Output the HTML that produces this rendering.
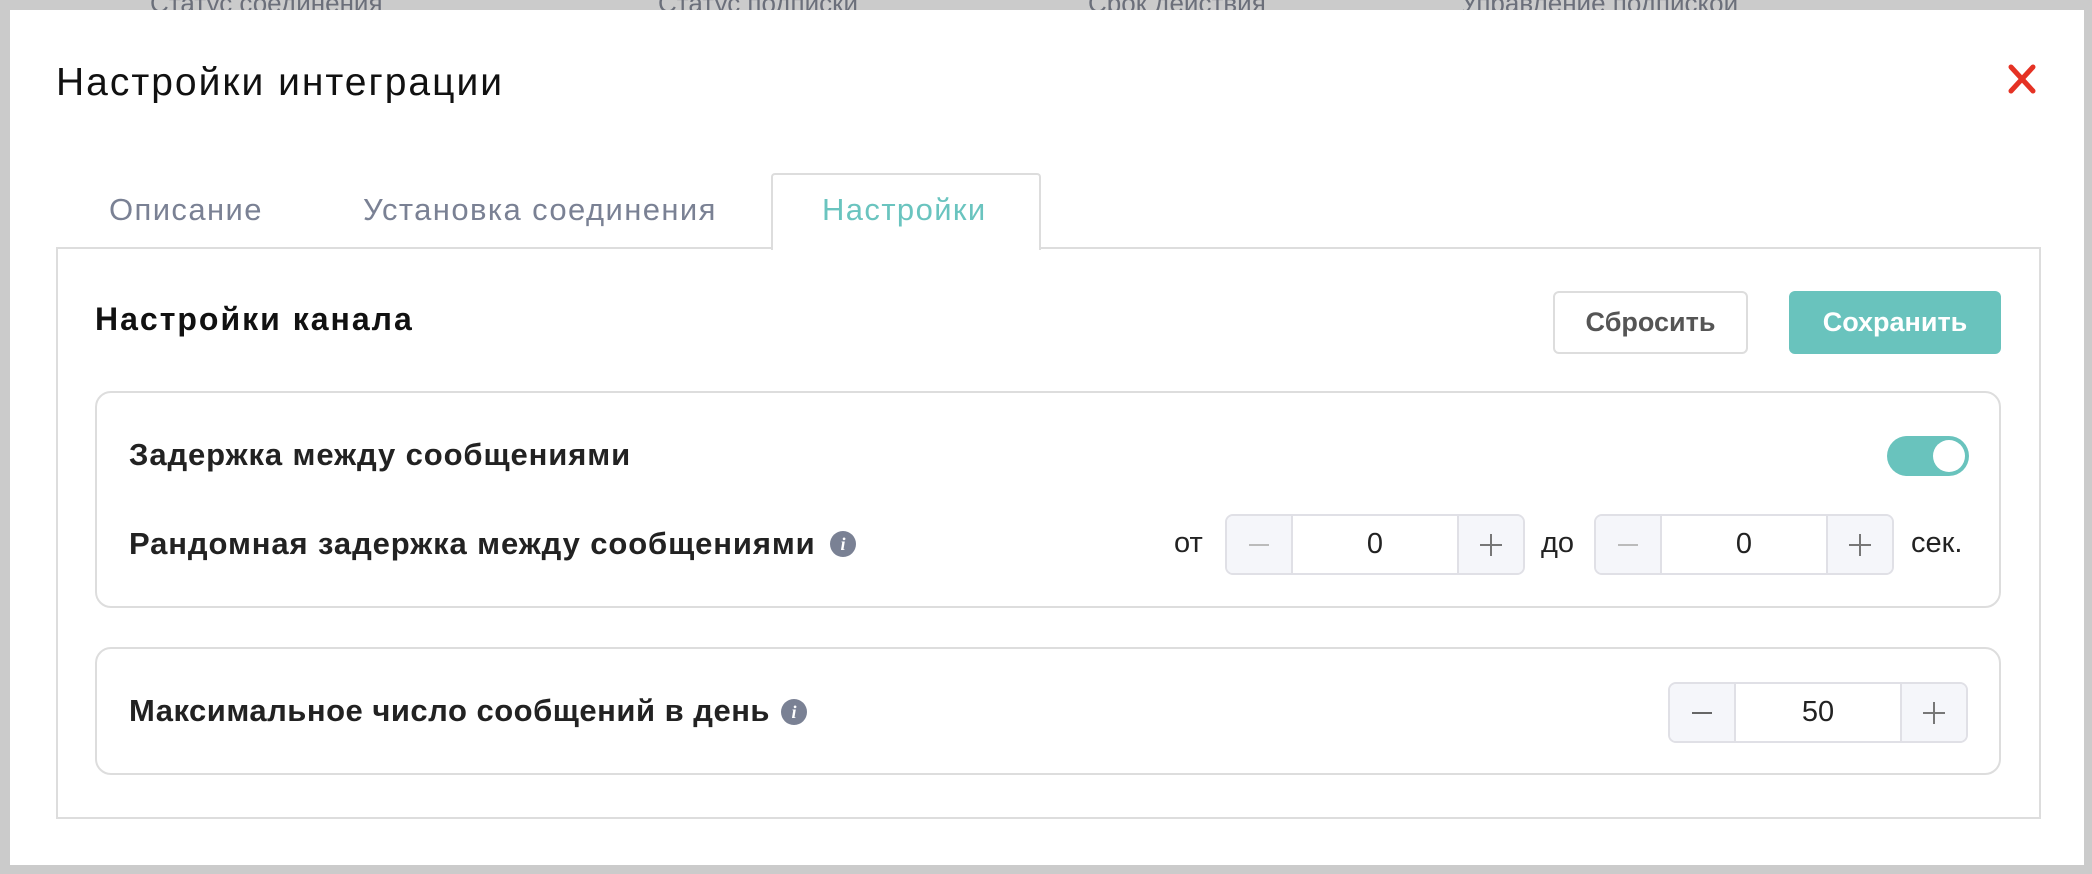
<!DOCTYPE html>
<html><head><meta charset="utf-8"><style>
*{box-sizing:border-box;margin:0;padding:0}
body{width:2092px;height:874px;background:#cbcbcb;position:relative;overflow:hidden;font-family:"Liberation Sans","Noto Sans CJK SC",sans-serif;color:#222}
.a{position:absolute}
.hdr{top:-12px;font-size:26px;color:#6b6f7a;white-space:nowrap}
.modal{left:10px;top:10px;width:2074px;height:855px;background:#fff}
.tab{font-size:31px;letter-spacing:1.4px;color:#7a8194;top:192px}
.panel{left:56px;top:247px;width:1985px;height:572px;border:2px solid #ddd}
.card{border:2px solid #ddd;border-radius:16px;left:95px;width:1906px}
.lbl{font-size:31px;letter-spacing:0.9px;font-weight:bold;color:#222;white-space:nowrap}
.info{width:26px;height:26px;border-radius:50%;background:#7a8194;color:#fff;font:italic bold 18px "Liberation Serif",serif;text-align:center;line-height:26px}
.st{height:61px;width:300px;border:2px solid #e0e0e6;border-radius:8px;display:flex;overflow:hidden}
.st .b{width:64px;background:#f5f6fa;display:flex;align-items:center;justify-content:center}
.st .v{flex:1;border-left:2px solid #e0e0e6;border-right:2px solid #e0e0e6;display:flex;align-items:center;justify-content:center;font-size:29px;color:#222}
.w{font-size:29px;color:#222}
</style></head><body>
<div class="a hdr" style="left:150px">Статус соединения</div>
<div class="a hdr" style="left:658px">Статус подписки</div>
<div class="a hdr" style="left:1088px">Срок действия</div>
<div class="a hdr" style="left:1461px">Управление подпиской</div>
<div class="a modal"></div>
<div class="a" style="left:56px;top:61px;font-size:39px;letter-spacing:2px;color:#111;white-space:nowrap">Настройки интеграции</div>
<svg class="a" style="left:2007px;top:64px" width="30" height="30" viewBox="0 0 30 30"><path d="M4 3L26 27M26 3L4 27" stroke="#e53224" stroke-width="5" stroke-linecap="round"/></svg>
<div class="a" style="left:771px;top:173px;width:270px;height:77px;border:2px solid #ddd;border-bottom:none;border-radius:4px 4px 0 0;background:#fff;z-index:2"></div>
<div class="a panel"></div>
<div class="a" style="left:773px;top:246px;width:266px;height:4px;background:#fff;z-index:3"></div>
<div class="a tab" style="left:109px">Описание</div>
<div class="a tab" style="left:363px">Установка соединения</div>
<div class="a tab" style="left:822px;color:#6ac4bf;z-index:4">Настройки</div>
<div class="a" style="left:95px;top:301px;font-size:32px;letter-spacing:2px;font-weight:bold;color:#111">Настройки канала</div>
<div class="a" style="left:1553px;top:291px;width:195px;height:63px;border:2px solid #ddd;border-radius:6px;font-size:27px;font-weight:bold;color:#555;display:flex;align-items:center;justify-content:center">Сбросить</div>
<div class="a" style="left:1789px;top:291px;width:212px;height:63px;background:#69c3bd;border-radius:6px;font-size:27px;font-weight:bold;color:#fff;display:flex;align-items:center;justify-content:center">Сохранить</div>
<div class="a card" style="top:391px;height:217px"></div>
<div class="a lbl" style="left:129px;top:437px">Задержка между сообщениями</div>
<div class="a" style="left:1887px;top:436px;width:82px;height:40px;border-radius:20px;background:#69c3bd"><div class="a" style="right:4px;top:4px;width:32px;height:32px;border-radius:50%;background:#fff"></div></div>
<div class="a lbl" style="left:129px;top:526px">Рандомная задержка между сообщениями</div>
<div class="a info" style="left:830px;top:531px">i</div>
<div class="a w" style="left:1174px;top:527px">от</div>
<div class="a st" style="left:1225px;top:514px"><div class="b"><svg width="24" height="24"><path d="M2 12H22" stroke="#bbb" stroke-width="2"/></svg></div><div class="v">0</div><div class="b"><svg width="24" height="24"><path d="M1 12H23M12 1V23" stroke="#777" stroke-width="2"/></svg></div></div>
<div class="a w" style="left:1541px;top:527px">до</div>
<div class="a st" style="left:1594px;top:514px"><div class="b"><svg width="24" height="24"><path d="M2 12H22" stroke="#bbb" stroke-width="2"/></svg></div><div class="v">0</div><div class="b"><svg width="24" height="24"><path d="M1 12H23M12 1V23" stroke="#777" stroke-width="2"/></svg></div></div>
<div class="a w" style="left:1911px;top:527px">сек.</div>
<div class="a card" style="top:647px;height:128px"></div>
<div class="a lbl" style="left:129px;top:693px;letter-spacing:0.5px">Максимальное число сообщений в день</div>
<div class="a info" style="left:781px;top:699px">i</div>
<div class="a st" style="left:1668px;top:682px"><div class="b"><svg width="24" height="24"><path d="M2 12H22" stroke="#666" stroke-width="2"/></svg></div><div class="v">50</div><div class="b"><svg width="24" height="24"><path d="M1 12H23M12 1V23" stroke="#777" stroke-width="2"/></svg></div></div>
</body></html>
